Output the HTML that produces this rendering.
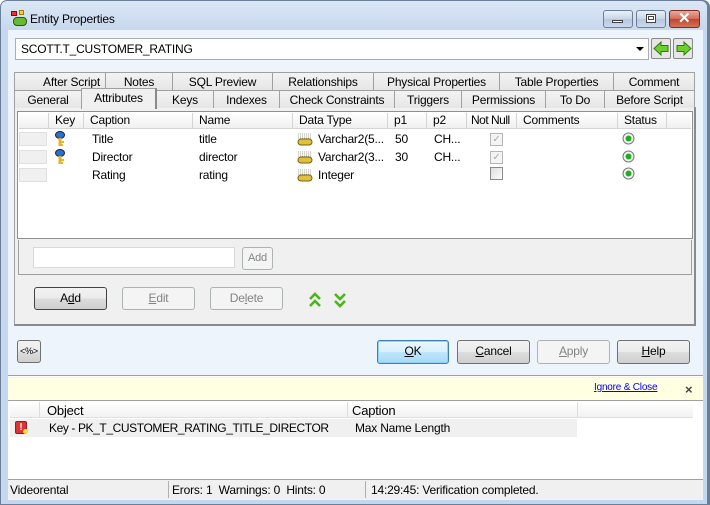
<!DOCTYPE html>
<html><head><style>
*{margin:0;padding:0;box-sizing:border-box}
body{width:710px;height:505px;position:relative;overflow:hidden;font-family:"Liberation Sans",sans-serif;font-size:12px;color:#000;background:#fff;letter-spacing:-0.2px}
.a{position:absolute}
.t{position:absolute;white-space:nowrap}
.btn{position:absolute;border:1px solid #707070;border-radius:3px;background:linear-gradient(#f2f2f2,#ebebeb 50%,#dddddd 51%,#cfcfcf);text-align:center;line-height:20px}
.dis{border-color:#adb2b5;background:#f4f4f4;color:#838383}
.tab{position:absolute;height:18px;border:1px solid #a0a0a0;border-bottom:none;background:linear-gradient(#f3f3f3,#e6e6e6);text-align:center;line-height:19px;font-size:12px}
.hd{position:absolute;top:0;height:15px;border-right:1px solid #d5d5d5;line-height:15px;padding-left:6px;white-space:nowrap;overflow:hidden}
</style></head><body>
<div class="a" style="left:0;top:0;width:710px;height:505px;background:#6b7f99;border-radius:7px 7px 0 0"></div>
<div class="a" style="left:1px;top:1px;width:706px;height:503px;background:linear-gradient(#dbe7f5,#c6d8ee 30px,#c4d7ee);border-radius:6px 6px 0 0"></div>
<div class="a" style="left:11px;top:11px;width:6px;height:5px;background:#e33;border:1px solid #900"></div>
<div class="a" style="left:19px;top:10px;width:5px;height:5px;background:#fc3;border:1px solid #a70"></div>
<div class="a" style="left:13px;top:17px;width:14px;height:9px;background:#6b3;border-radius:4px;border:1px solid #350"></div>
<div class="t" style="left:30px;top:12px;font-size:12px">Entity Properties</div>
<div class="a" style="left:603px;top:10px;width:30px;height:18px;border:1px solid #6d7d95;border-radius:3px;background:linear-gradient(#e9f0f8,#c8d6e8 50%,#b6c8df 51%,#c9d9ec)"></div>
<div class="a" style="left:612px;top:20px;width:11px;height:3px;background:#fff;border:1px solid #444"></div>
<div class="a" style="left:636px;top:10px;width:30px;height:18px;border:1px solid #6d7d95;border-radius:3px;background:linear-gradient(#e9f0f8,#c8d6e8 50%,#b6c8df 51%,#c9d9ec)"></div>
<div class="a" style="left:646px;top:14px;width:10px;height:9px;background:#fff;border:1px solid #444"></div>
<div class="a" style="left:648px;top:16px;width:6px;height:4px;border:1px solid #444"></div>
<div class="a" style="left:669px;top:10px;width:31px;height:18px;border:1px solid #7a2b23;border-radius:3px;background:linear-gradient(#e9a99c,#d46a55 50%,#c3432c 51%,#d0735a)"></div>
<div class="t" style="left:678px;top:9px;color:#fff;font-weight:bold;font-size:15px">✕</div>
<div class="a" style="left:8px;top:30px;width:695px;height:470px;background:#eef4fb"></div>
<div class="a" style="left:15px;top:38px;width:634px;height:22px;background:#fff;border:1px solid #abadb3"></div>
<div class="t" style="left:21px;top:42px;font-size:12px">SCOTT.T_CUSTOMER_RATING</div>
<div class="a" style="left:636px;top:47px;width:0;height:0;border-left:4px solid transparent;border-right:4px solid transparent;border-top:4px solid #000"></div>
<div class="a" style="left:651px;top:38px;width:20px;height:21px;border:1px solid #888;border-radius:2px;background:#e6e6e6"></div>
<svg class="a" style="left:653px;top:40px" width="17" height="17"><path d="M1 8.5 L8 2 V5.5 H15 V11.5 H8 V15 Z" fill="#6ccf2e" stroke="#2f7a10"/></svg>
<div class="a" style="left:673px;top:38px;width:20px;height:21px;border:1px solid #888;border-radius:2px;background:#e6e6e6"></div>
<svg class="a" style="left:675px;top:40px" width="17" height="17"><path d="M16 8.5 L9 2 V5.5 H2 V11.5 H9 V15 Z" fill="#6ccf2e" stroke="#2f7a10"/></svg>
<div class="tab" style="left:14px;top:72px;width:99px;padding-left:16px">After Script</div>
<div class="tab" style="left:105px;top:72px;width:68px">Notes</div>
<div class="tab" style="left:172px;top:72px;width:101px">SQL Preview</div>
<div class="tab" style="left:272px;top:72px;width:102px">Relationships</div>
<div class="tab" style="left:373px;top:72px;width:127px">Physical Properties</div>
<div class="tab" style="left:499px;top:72px;width:115px">Table Properties</div>
<div class="tab" style="left:613px;top:72px;width:82px">Comment</div>
<div class="a" style="left:14px;top:107px;width:682px;height:219px;background:#f0f0f0;border:1px solid #a0a0a0;border-right:2px solid #8a8a8a;border-bottom:2px solid #8a8a8a"></div>
<div class="tab" style="left:14px;top:90px;width:68px">General</div>
<div class="tab" style="left:156px;top:90px;width:58px">Keys</div>
<div class="tab" style="left:213px;top:90px;width:67px">Indexes</div>
<div class="tab" style="left:279px;top:90px;width:116px">Check Constraints</div>
<div class="tab" style="left:394px;top:90px;width:68px">Triggers</div>
<div class="tab" style="left:461px;top:90px;width:85px">Permissions</div>
<div class="tab" style="left:545px;top:90px;width:60px">To Do</div>
<div class="tab" style="left:604px;top:90px;width:91px">Before Script</div>
<div class="tab" style="left:81px;top:88px;width:76px;height:21px;background:#f0f0f0;line-height:19px;border-right:2px solid #8a8a8a">Attributes</div>
<div class="a" style="left:17px;top:111px;width:676px;height:128px;background:#fff;border:1px solid #8e8f8f">
 <div class="a" style="left:1px;top:1px;width:672px;height:16px;background:linear-gradient(#fff,#f0f0f0);border-bottom:1px solid #d5d5d5">
  <div class="hd" style="left:0;width:30px;padding:0"></div>
  <div class="hd" style="left:30px;width:35px">Key</div>
  <div class="hd" style="left:65px;width:109px">Caption</div>
  <div class="hd" style="left:174px;width:100px">Name</div>
  <div class="hd" style="left:274px;width:95px">Data Type</div>
  <div class="hd" style="left:369px;width:39px">p1</div>
  <div class="hd" style="left:408px;width:40px">p2</div>
  <div class="hd" style="left:448px;width:50px;padding-left:4px;letter-spacing:-0.5px">Not Null</div>
  <div class="hd" style="left:498px;width:101px">Comments</div>
  <div class="hd" style="left:599px;width:49px">Status</div>
 </div>
 <div class="a" style="left:1px;top:20px;width:28px;height:14px;background:#f0f0f0;border:1px solid #e0e0e0"></div>
 <div class="a" style="left:1px;top:38px;width:28px;height:14px;background:#f0f0f0;border:1px solid #e0e0e0"></div>
 <div class="a" style="left:1px;top:56px;width:28px;height:14px;background:#f0f0f0;border:1px solid #e0e0e0"></div>
</div>
<svg class="a" style="left:55px;top:131px" width="12" height="17"><ellipse cx="5" cy="4" rx="4.5" ry="3.5" fill="#2d6fd0" stroke="#124"/><rect x="3.5" y="7" width="3" height="8" fill="#e8b32a"/><rect x="6" y="10" width="3" height="2" fill="#e8b32a"/><rect x="6" y="13" width="2" height="2" fill="#e8b32a"/></svg>
<svg class="a" style="left:55px;top:149px" width="12" height="17"><ellipse cx="5" cy="4" rx="4.5" ry="3.5" fill="#2d6fd0" stroke="#124"/><rect x="3.5" y="7" width="3" height="8" fill="#e8b32a"/><rect x="6" y="10" width="3" height="2" fill="#e8b32a"/><rect x="6" y="13" width="2" height="2" fill="#e8b32a"/></svg>
<div class="t" style="left:92px;top:132px">Title</div><div class="t" style="left:199px;top:132px">title</div>
<div class="t" style="left:92px;top:150px">Director</div><div class="t" style="left:199px;top:150px">director</div>
<div class="t" style="left:92px;top:168px">Rating</div><div class="t" style="left:199px;top:168px">rating</div>
<svg class="a" style="left:297px;top:132px" width="16" height="14"><path d="M1 2h13M1 4h13M1 6h13" stroke="#aa9" stroke-dasharray="1 1"/><rect x="1" y="7" width="14" height="6" rx="3" fill="#e0c040" stroke="#776010"/></svg>
<svg class="a" style="left:297px;top:150px" width="16" height="14"><path d="M1 2h13M1 4h13M1 6h13" stroke="#aa9" stroke-dasharray="1 1"/><rect x="1" y="7" width="14" height="6" rx="3" fill="#e0c040" stroke="#776010"/></svg>
<svg class="a" style="left:297px;top:168px" width="16" height="14"><path d="M1 2h13M1 4h13M1 6h13" stroke="#aa9" stroke-dasharray="1 1"/><rect x="1" y="7" width="14" height="6" rx="3" fill="#e0c040" stroke="#776010"/></svg>
<div class="t" style="left:318px;top:132px">Varchar2(5...</div>
<div class="t" style="left:318px;top:150px">Varchar2(3...</div>
<div class="t" style="left:318px;top:168px">Integer</div>
<div class="t" style="left:395px;top:132px">50</div><div class="t" style="left:434px;top:132px">CH...</div>
<div class="t" style="left:395px;top:150px">30</div><div class="t" style="left:434px;top:150px">CH...</div>
<div class="a" style="left:490px;top:133px;width:13px;height:13px;border:1px solid #b5b5b5;background:#f4f4f4;color:#aaa;font-size:10px;line-height:11px;text-align:center">✓</div>
<div class="a" style="left:490px;top:151px;width:13px;height:13px;border:1px solid #b5b5b5;background:#f4f4f4;color:#aaa;font-size:10px;line-height:11px;text-align:center">✓</div>
<div class="a" style="left:490px;top:167px;width:13px;height:13px;border:1px solid #8a8a8a;background:linear-gradient(135deg,#ddd,#fff)"></div>
<svg class="a" style="left:622px;top:132px" width="13" height="13"><circle cx="6.5" cy="6.5" r="5.5" fill="#f4f4f4" stroke="#777"/><circle cx="6.5" cy="6.5" r="3" fill="#1db01d"/></svg>
<svg class="a" style="left:622px;top:150px" width="13" height="13"><circle cx="6.5" cy="6.5" r="5.5" fill="#f4f4f4" stroke="#777"/><circle cx="6.5" cy="6.5" r="3" fill="#1db01d"/></svg>
<svg class="a" style="left:622px;top:167px" width="13" height="13"><circle cx="6.5" cy="6.5" r="5.5" fill="#f4f4f4" stroke="#777"/><circle cx="6.5" cy="6.5" r="3" fill="#1db01d"/></svg>
<div class="a" style="left:18px;top:240px;width:674px;height:35px;border:1px solid #a0a0a0;border-top:none;background:#f0f0f0"></div>
<div class="a" style="left:33px;top:247px;width:202px;height:21px;background:#fff;border:1px solid #d9d9d9"></div>
<div class="btn dis" style="left:242px;top:247px;width:31px;height:23px;font-size:11px">Add</div>
<div class="btn" style="left:34px;top:287px;width:73px;height:23px;border-color:#444">A<u>d</u>d</div>
<div class="btn dis" style="left:122px;top:287px;width:73px;height:23px"><u>E</u>dit</div>
<div class="btn dis" style="left:210px;top:287px;width:73px;height:23px">De<u>l</u>ete</div>
<svg class="a" style="left:308px;top:292px" width="14" height="16"><path d="M2 7 L7 2 L12 7 M2 14 L7 9 L12 14" fill="none" stroke="#4bb51b" stroke-width="2.6"/></svg>
<svg class="a" style="left:333px;top:292px" width="14" height="16"><path d="M2 2 L7 7 L12 2 M2 9 L7 14 L12 9" fill="none" stroke="#4bb51b" stroke-width="2.6"/></svg>
<div class="btn" style="left:17px;top:340px;width:24px;height:23px;font-size:9px">&lt;%&gt;</div>
<div class="btn" style="left:377px;top:340px;width:72px;height:24px;border-color:#3c7fb1;background:linear-gradient(#eaf6fd,#d9f0fc 50%,#bee6fd 51%,#a7d9f5);box-shadow:inset 0 0 0 1px #8fd3f8"><u>O</u>K</div>
<div class="btn" style="left:457px;top:340px;width:73px;height:24px"><u>C</u>ancel</div>
<div class="btn dis" style="left:537px;top:340px;width:73px;height:24px"><u>A</u>pply</div>
<div class="btn" style="left:617px;top:340px;width:73px;height:24px"><u>H</u>elp</div>
<div class="a" style="left:8px;top:375px;width:695px;height:1px;background:#a0a0a0"></div>
<div class="a" style="left:8px;top:376px;width:695px;height:1px;background:#fff"></div>
<div class="a" style="left:8px;top:378px;width:695px;height:22px;background:#ffffe1"></div>
<div class="t" style="left:594px;top:382px;font-size:10px;color:#00f;text-decoration:underline">Ignore &amp; Close</div>
<div class="t" style="left:685px;top:382px;font-size:13px;font-weight:bold;color:#444">×</div>
<div class="a" style="left:8px;top:400px;width:695px;height:81px;background:#fff;border-top:1px solid #a0a0a0"></div>
<div class="a" style="left:10px;top:402px;width:683px;height:16px;background:linear-gradient(#fff,#f2f2f2);border-bottom:1px solid #e0e0e0"></div>
<div class="a" style="left:39px;top:402px;width:1px;height:16px;background:#ddd"></div>
<div class="a" style="left:347px;top:402px;width:1px;height:16px;background:#ddd"></div>
<div class="a" style="left:577px;top:402px;width:1px;height:16px;background:#ddd"></div>
<div class="t" style="left:47px;top:403px;font-size:13px">Object</div>
<div class="t" style="left:352px;top:403px;font-size:13px">Caption</div>
<div class="a" style="left:10px;top:419px;width:567px;height:18px;background:#f0f0f0"></div>
<div class="a" style="left:15px;top:421px;width:12px;height:13px;background:#d33;border:1px solid #822;border-radius:2px;color:#fff;font-size:10px;font-weight:bold;line-height:11px;text-align:center">!</div>
<div class="a" style="left:23px;top:429px;width:5px;height:5px;background:#fd3;border-radius:50%"></div>
<div class="t" style="left:49px;top:421px;letter-spacing:-0.4px">Key - PK_T_CUSTOMER_RATING_TITLE_DIRECTOR</div>
<div class="t" style="left:355px;top:421px">Max Name Length</div>
<div class="a" style="left:8px;top:479px;width:695px;height:20px;background:#f0f0f0;border-top:1px solid #a0a0a0"></div>
<div class="a" style="left:168px;top:481px;width:1px;height:17px;background:#b0b0b0"></div>
<div class="a" style="left:365px;top:481px;width:1px;height:17px;background:#b0b0b0"></div>
<div class="t" style="left:10px;top:483px">Videorental</div>
<div class="t" style="left:172px;top:483px">Erors: 1&nbsp; Warnings: 0&nbsp; Hints: 0</div>
<div class="t" style="left:371px;top:483px">14:29:45: Verification completed.</div>
</body></html>
